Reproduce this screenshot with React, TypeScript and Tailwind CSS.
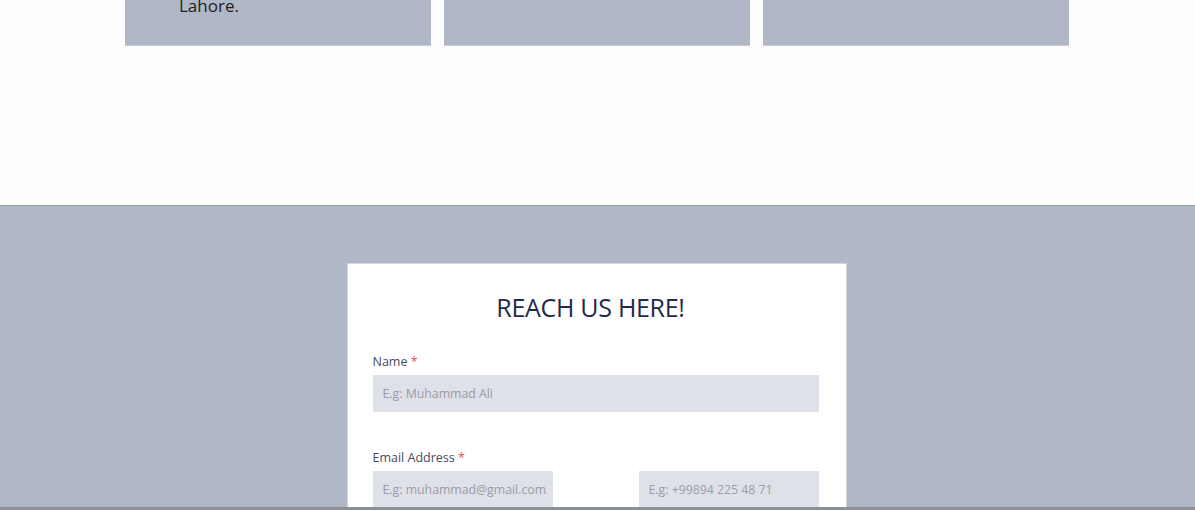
import React from 'react';

const font = { fontFamily: '"Open Sans", "Noto Sans", Arial, sans-serif' };

function Field({ label, placeholder, className }: { label?: string; placeholder: string; className?: string }) {
  return (
    <div className={className}>
      {label && (
        <label className="block text-[12.5px] text-[#454b5c] mb-[3px]">
          {label} <span className="text-[#e0525c]">*</span>
        </label>
      )}
      <input
        placeholder={placeholder}
        className="w-full h-[37px] bg-[#dfe1e8] pl-[10px] pr-[3px] text-[12.3px] text-[#555] placeholder:text-[#9a9ca6] outline-none"
      />
    </div>
  );
}

export default function App() {
  return (
    <div className="w-[1195px] h-[510px] overflow-hidden bg-white" style={font}>
      {/* location cards, cut off at the top */}
      <div className="h-[205px] bg-[#fdfdfd]">
        <div className="flex gap-[13px] pl-[125px]">
          <div className="w-[306px] h-[46px] bg-[#b0b7c6] border-b border-[#c8ccd6] overflow-hidden">
            <p className="pl-[54px] -mt-[6px] text-[17px] leading-[24px] text-[#222]">Lahore.</p>
          </div>
          <div className="w-[306px] h-[46px] bg-[#b0b7c6] border-b border-[#c8ccd6]" />
          <div className="w-[306px] h-[46px] bg-[#b0b7c6] border-b border-[#c8ccd6]" />
        </div>
      </div>

      {/* contact section */}
      <section className="h-[302px] overflow-hidden bg-[#b0b7c6] border-t border-[#9a9ea6] pt-[57px] pr-[2px] flex justify-center">
        <div className="w-[500px] bg-white border border-[#d4d7de] pl-[25px] pt-[26px] pb-6 h-fit">
          <div className="w-[446px]">
            <h2 className="text-center text-[25px] leading-[34px] text-[#1f2a4d] tracking-[-0.3px] pr-[10px]">REACH US HERE!</h2>
            <Field className="mt-[29px]" label="Name" placeholder="E.g: Muhammad Ali" />
            <div className="mt-[37px]">
              <label className="block text-[12.5px] text-[#454b5c] mb-[3px]">
                Email Address <span className="text-[#e0525c]">*</span>
              </label>
              <div className="flex justify-between">
                <Field className="w-[180px]" placeholder="E.g: muhammad@gmail.com" />
                <Field className="w-[180px]" placeholder="E.g: +99894 225 48 71" />
              </div>
            </div>
          </div>
        </div>
      </section>

      <div className="h-[3px] bg-[#8e9097]" />
    </div>
  );
}
